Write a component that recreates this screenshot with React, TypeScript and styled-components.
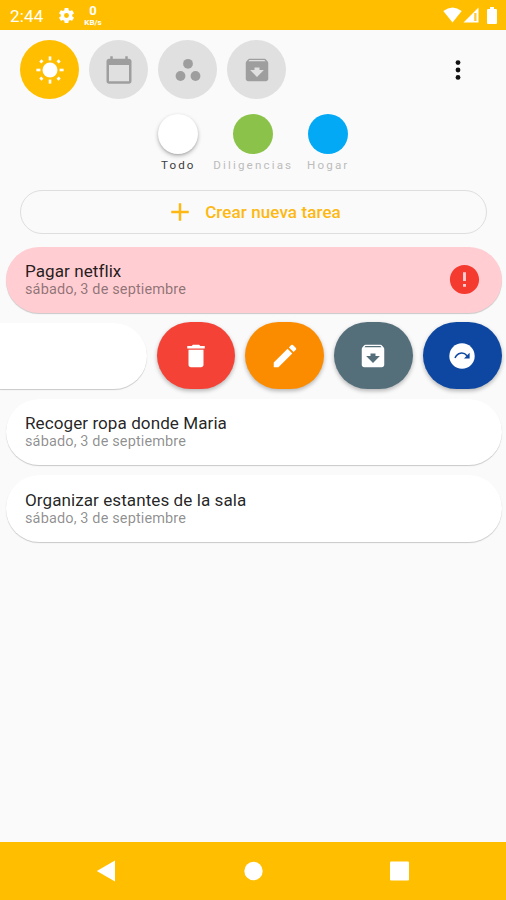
import React from "react";
import styled, { createGlobalStyle } from "styled-components";

const GlobalStyle = createGlobalStyle`
  * { box-sizing: border-box; }
  body { margin: 0; background: #fafafa; font-family: Roboto, sans-serif; }
  button { font: inherit; border: 0; padding: 0; background: none; }
  svg { display: block; flex: none; }
`;

const Screen = styled.div`
  width: 506px;
  height: 900px;
  display: flex;
  flex-direction: column;
  background: #fafafa;
  overflow: hidden;
`;

const StatusBar = styled.header`
  height: 30px;
  flex: none;
  display: flex;
  align-items: center;
  padding: 0 9px 0 10px;
  background: #ffbf00;
  color: #fff;
`;

const Clock = styled.span`
  width: 47px;
  font-size: 17px;
  line-height: 28px;
  letter-spacing: 0.2px;
  padding-top: 2px;
`;

const NetSpeed = styled.div`
  display: flex;
  flex-direction: column;
  align-items: center;
  width: 20px;
  margin-left: 7px;
  font-weight: 700;
`;

const NetValue = styled.div`
  font-size: 13px;
  line-height: 15px;
`;

const Unit = styled.div`
  font-size: 8px;
  line-height: 9px;
`;

const StatusIcons = styled.div`
  display: flex;
  align-items: center;
  gap: 2px;
  margin-left: auto;
`;

const TabBar = styled.nav`
  display: flex;
  align-items: center;
  gap: 10px;
  height: 59px;
  flex: none;
  margin: 10px 33.5px 0 20px;
`;

const Tab = styled.button<{ $active?: boolean }>`
  width: 59px;
  height: 59px;
  border-radius: 50%;
  display: grid;
  place-items: center;
  background: ${(p) => (p.$active ? "#ffbf00" : "#e0e0e0")};
  color: ${(p) => (p.$active ? "#fff" : "#9e9e9e")};
`;

const MoreButton = styled.button`
  margin-left: auto;
  color: #111;
`;

const Categories = styled.div`
  display: grid;
  grid-template-columns: repeat(3, 75px);
  justify-content: center;
  height: 60.5px;
  flex: none;
  margin: 14.5px 0 0 0.5px;
`;

const Category = styled.div<{ $active?: boolean }>`
  display: flex;
  flex-direction: column;
  align-items: center;
  white-space: nowrap;
  font-size: 11.6px;
  line-height: 14px;
  letter-spacing: 2.15px;
  color: ${(p) => (p.$active ? "#3d3d3d" : "#bcbcbc")};
`;

const Dot = styled.span<{ $color: string; $raised?: boolean }>`
  width: 40px;
  height: 40px;
  flex: none;
  margin-bottom: 4px;
  border-radius: 50%;
  background: ${(p) => p.$color};
  box-shadow: ${(p) => (p.$raised ? "0 2px 4px rgba(0,0,0,.25), 0 1px 2px rgba(0,0,0,.12)" : "none")};
`;

const CreateButton = styled.button`
  display: flex;
  align-items: center;
  justify-content: center;
  gap: 10px;
  height: 44px;
  flex: none;
  margin: 16px 19px 0 20px;
  padding-right: 1px;
  border: 1px solid #dedede;
  border-radius: 22px;
  color: #fdb813;
  font-weight: 500;
  font-size: 17px;
  letter-spacing: 0.1px;
`;

const TaskList = styled.main`
  flex: 1;
  display: flex;
  flex-direction: column;
  gap: 10px;
  padding: 12.5px 4.5px 0 5.5px;
`;

const TaskCard = styled.article<{ $urgent?: boolean }>`
  height: 66.3px;
  display: flex;
  align-items: center;
  justify-content: space-between;
  padding: 0 19.5px 0 19.5px;
  border-radius: 33.2px;
  background: ${(p) => (p.$urgent ? "#ffcdd2" : "#fff")};
  box-shadow: 0 1px 1px rgba(0, 0, 0, 0.2);
`;

const TaskTitle = styled.div`
  font-size: 17.1px;
  line-height: 20px;
  letter-spacing: 0.05px;
  color: rgba(0, 0, 0, 0.87);
`;

const TaskDate = styled.div`
  font-size: 14.5px;
  line-height: 18px;
  letter-spacing: 0.13px;
  color: rgba(0, 0, 0, 0.46);
`;

const SwipedRow = styled.div`
  height: 66.3px;
  display: flex;
  align-items: center;
  gap: 10px;
  margin-left: -5.5px;
`;

const SwipedCard = styled.div`
  width: 146.5px;
  height: 66.3px;
  border-radius: 0 33.2px 33.2px 0;
  background: #fff;
  box-shadow: 0 1px 1px rgba(0, 0, 0, 0.2);
`;

const Action = styled.button<{ $color: string }>`
  flex: 1;
  height: 67px;
  display: grid;
  place-items: center;
  border-radius: 33.5px;
  background: ${(p) => p.$color};
  color: #fff;
  box-shadow: 0 2px 4px rgba(0, 0, 0, 0.28);
`;

const NavBar = styled.footer`
  height: 58px;
  flex: none;
  display: flex;
  align-items: center;
  justify-content: space-between;
  padding: 0 96px;
  background: #ffbf00;
`;

const ARCHIVE =
  "M20.54 5.23l-1.39-1.68C18.88 3.21 18.47 3 18 3H6c-.47 0-.88.21-1.16.55L3.46 5.23C3.17 5.57 3 6.02 3 6.5V19c0 1.1.9 2 2 2h14c1.1 0 2-.9 2-2V6.5c0-.48-.17-.93-.46-1.27zM12 17.5L6.5 12H10v-2h4v2h3.5L12 17.5zM5.12 5l.81-1h12l.94 1H5.12z";
const CALENDAR =
  "M20 3h-1V1h-2v2H7V1H5v2H4c-1.1 0-2 .9-2 2v16c0 1.1.9 2 2 2h16c1.1 0 2-.9 2-2V5c0-1.1-.9-2-2-2zm0 18H4V8h16v13z";
const GEAR =
  "M19.14 12.94c.04-.3.06-.61.06-.94 0-.32-.02-.64-.07-.94l2.03-1.58c.18-.14.23-.41.12-.61l-1.92-3.32c-.12-.22-.37-.29-.59-.22l-2.39.96c-.5-.38-1.03-.7-1.62-.94l-.36-2.54c-.04-.24-.24-.41-.48-.41h-3.84c-.24 0-.43.17-.47.41l-.36 2.54c-.59.24-1.13.57-1.62.94l-2.39-.96c-.22-.08-.47 0-.59.22L2.74 8.87c-.12.21-.08.47.12.61l2.03 1.58c-.05.3-.09.63-.09.94s.02.64.07.94l-2.03 1.58c-.18.14-.23.41-.12.61l1.92 3.32c.12.22.37.29.59.22l2.39-.96c.5.38 1.03.7 1.62.94l.36 2.54c.05.24.24.41.48.41h3.84c.24 0 .44-.17.47-.41l.36-2.54c.59-.24 1.13-.56 1.62-.94l2.39.96c.22.08.47 0 .59-.22l1.92-3.32c.12-.22.07-.47-.12-.61l-2.01-1.58zM12 15.1A3.1 3.1 0 1 1 12 8.9a3.1 3.1 0 0 1 0 6.2z";
const TRASH = "M6 19c0 1.1.9 2 2 2h8c1.1 0 2-.9 2-2V7H6v12zM19 4h-3.5l-1-1h-5l-1 1H5v2h14V4z";
const PENCIL =
  "M3 17.25V21h3.75L17.81 9.94l-3.75-3.75L3 17.25zM20.71 7.04a1 1 0 0 0 0-1.41l-2.34-2.34a1 1 0 0 0-1.41 0l-1.83 1.83 3.75 3.75 1.83-1.83z";
const ERROR =
  "M12 2C6.48 2 2 6.48 2 12s4.48 10 10 10 10-4.48 10-10S17.52 2 12 2zm1 15h-2v-2h2v2zm0-4h-2V7h2v6z";
const PLUS = "M19 13h-6v6h-2v-6H5v-2h6V5h2v6h6v2z";

const Icon = ({ d, size = 30 }: { d: string; size?: number }) => (
  <svg width={size} height={size} viewBox="0 0 24 24" fill="currentColor">
    <path d={d} />
  </svg>
);

const SunIcon = () => (
  <svg width="30" height="30" viewBox="-15 -15 30 30" fill="currentColor">
    <circle r="7.5" />
    {[0, 90, 180, 270].map((a) => (
      <rect key={a} x="-1.3" y="-13.6" width="2.6" height="4" transform={`rotate(${a})`} />
    ))}
    {[45, 135, 225, 315].map((a) => (
      <rect key={a} x="-1.5" y="-13.6" width="3" height="2.8" transform={`rotate(${a})`} />
    ))}
  </svg>
);

const GroupIcon = () => (
  <svg width="30" height="30" viewBox="-15 -15 30 30" fill="currentColor">
    <circle cx="0" cy="-6.2" r="4.9" />
    <circle cx="-7.5" cy="6" r="4.9" />
    <circle cx="7.5" cy="6" r="4.9" />
  </svg>
);

const MoreIcon = () => (
  <svg width="30" height="30" viewBox="-15 -15 30 30" fill="currentColor">
    <circle cy="-7.4" r="2.4" />
    <circle r="2.4" />
    <circle cy="7.4" r="2.4" />
  </svg>
);

const PostponeIcon = () => (
  <svg width="30" height="30" viewBox="-15 -15 30 30">
    <circle r="12.7" fill="#fff" />
    <path d="M-7 2.1C-4.8-3.8 1.6-4.4 5-.2" fill="none" stroke="#0d47a1" strokeWidth="1.5" />
    <path d="M7.6-3.2V2.4H2z" fill="#0d47a1" />
  </svg>
);

const WifiIcon = () => (
  <svg width="19" height="16" viewBox="0 0 19 16" fill="#fff">
    <path d="M.3 4Q9.5-3.2 18.7 4L9.5 15.5z" />
  </svg>
);

const SignalIcon = () => (
  <svg width="16" height="16" viewBox="0 0 16 16">
    <path d="M.5 15.500L15.500.5v15z" fill="#fff" />
    <path d="M11.2 6h2.3v8h-2.3z" fill="#ffc93a" />
  </svg>
);

const BatteryIcon = () => (
  <svg width="10" height="17" viewBox="0 0 10 17" fill="#fff">
    <path d="M3 0h4v2h2q1 0 1 1v13q0 1-1 1H1q-1 0-1-1V3q0-1 1-1h2z" />
  </svg>
);

const tasks = ["Recoger ropa donde Maria", "Organizar estantes de la sala"];
const DATE = "sábado, 3 de septiembre";

const TaskText = ({ title }: { title: string }) => (
  <div>
    <TaskTitle>{title}</TaskTitle>
    <TaskDate>{DATE}</TaskDate>
  </div>
);

const UrgentMark = styled.span`
  color: #f53b30;
`;

const SignalGroup = styled.div`
  display: flex;
  margin-right: 6px;
  gap: 1px;
`;

export default function App() {
  return (
    <Screen>
      <GlobalStyle />
      <StatusBar>
        <Clock>2:44</Clock>
        <Icon d={GEAR} size={19} />
        <NetSpeed>
          <NetValue>0</NetValue>
          <Unit>KB/s</Unit>
        </NetSpeed>
        <StatusIcons>
          <SignalGroup>
            <WifiIcon />
            <SignalIcon />
          </SignalGroup>
          <BatteryIcon />
        </StatusIcons>
      </StatusBar>
      <TabBar>
        <Tab $active><SunIcon /></Tab>
        <Tab><Icon d={CALENDAR} /></Tab>
        <Tab><GroupIcon /></Tab>
        <Tab><Icon d={ARCHIVE} /></Tab>
        <MoreButton><MoreIcon /></MoreButton>
      </TabBar>
      <Categories>
        <Category $active><Dot $color="#fff" $raised />Todo</Category>
        <Category><Dot $color="#8bc34a" />Diligencias</Category>
        <Category><Dot $color="#03a9f4" />Hogar</Category>
      </Categories>
      <CreateButton>
        <Icon d={PLUS} />
        Crear nueva tarea
      </CreateButton>
      <TaskList>
        <TaskCard $urgent>
          <TaskText title="Pagar netflix" />
          <UrgentMark><Icon d={ERROR} size={35} /></UrgentMark>
        </TaskCard>
        <SwipedRow>
          <SwipedCard />
          <Action $color="#f44336"><Icon d={TRASH} /></Action>
          <Action $color="#fb8c00"><Icon d={PENCIL} /></Action>
          <Action $color="#546e7a"><Icon d={ARCHIVE} /></Action>
          <Action $color="#0d47a1"><PostponeIcon /></Action>
        </SwipedRow>
        {tasks.map((title) => (
          <TaskCard key={title}>
            <TaskText title={title} />
          </TaskCard>
        ))}
      </TaskList>
      <NavBar>
        <svg width="20" height="22" viewBox="0 0 20 22" fill="#fff"><path d="M.8 11L19 .6v20.8z" /></svg>
        <svg width="20" height="20" viewBox="0 0 20 20" fill="#fff"><circle cx="10.5" cy="10" r="9.2" /></svg>
        <svg width="20" height="20" viewBox="0 0 20 20" fill="#fff"><rect x="0" y=".5" width="19" height="19" rx="1" /></svg>
      </NavBar>
    </Screen>
  );
}
